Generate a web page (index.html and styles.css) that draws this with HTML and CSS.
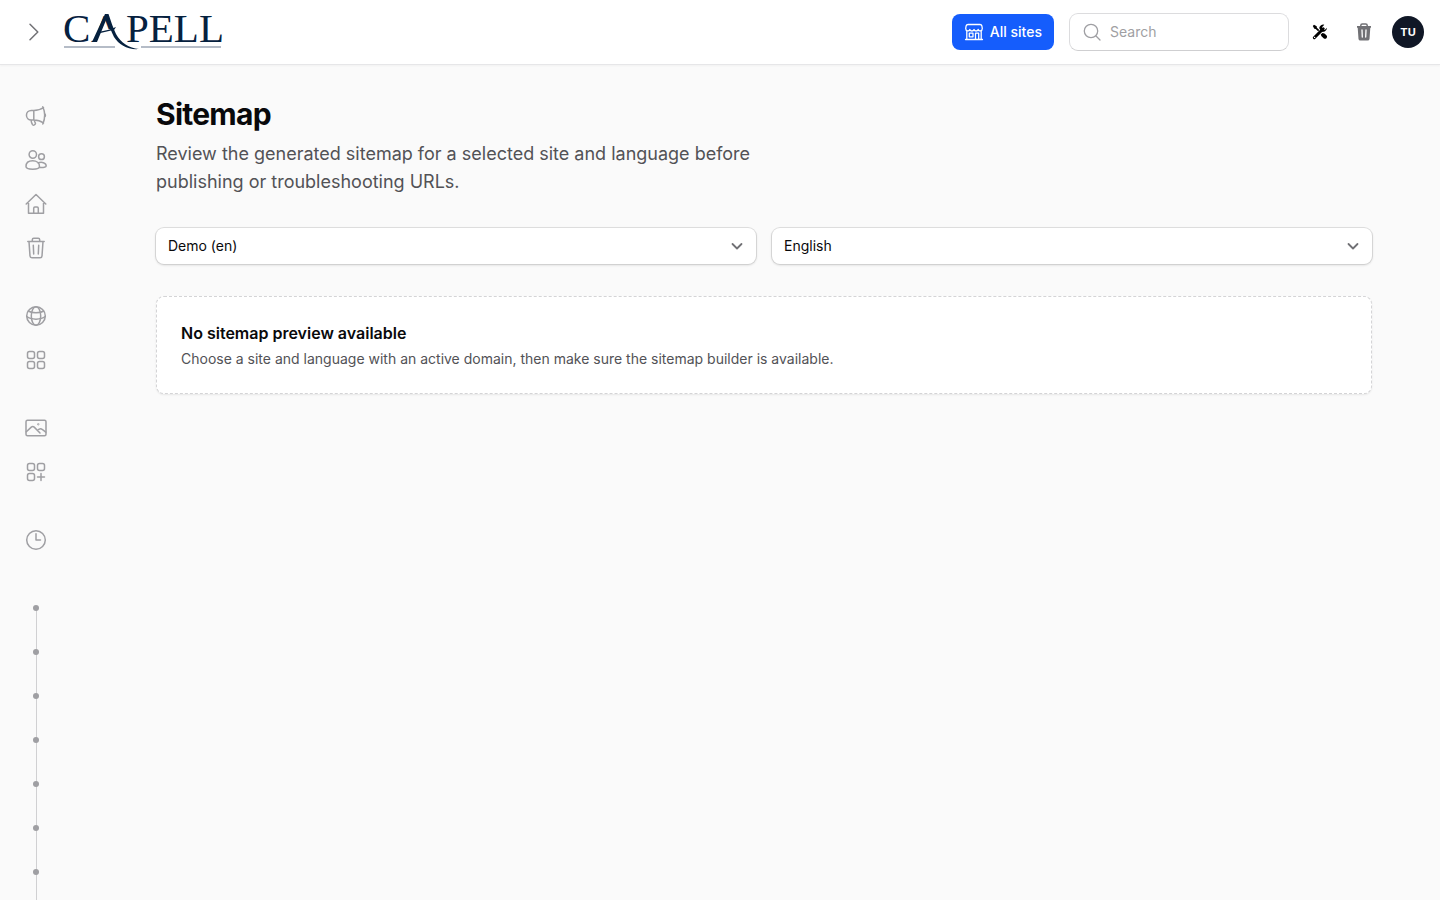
FILE: index.html
```html
<!DOCTYPE html>
<html lang="en">
<head>
<meta charset="utf-8">
<meta name="viewport" content="width=device-width, initial-scale=1">
<title>Sitemap</title>
<link rel="stylesheet" href="styles.css">
</head>
<body>
<header class="topbar">
  <button class="icon-btn expand" type="button" aria-label="Expand sidebar">
    <svg class="icon" viewBox="0 0 24 24"><path d="M8 4.200 15.800 12 8 19.800"/></svg>
  </button>
  <a class="logo" href="#" aria-label="Capell">
    <svg width="164" height="60" viewBox="0 -10 164 60">
      <defs><clipPath id="a-leg"><path d="M25 0H50V17H38V24H34V31H25Z"/></clipPath></defs>
      <g class="logo-letters">
        <text x="0" y="30">C</text>
        <text x="28" y="30" clip-path="url(#a-leg)">A</text>
        <text x="63" y="30">PELL</text>
      </g>
      <path class="logo-fill" d="M42 2H45.500C48 9 50 16 53 22C58 31 66 36 76 37C65 38 56 33 51 25C48 19 46 13 43.500 7L34 30H29Z"/>
      <path class="logo-fill" d="M35 20C42 19 48 17 53 15L51 18C46 19 40 20 34 22Z"/>
      <path class="logo-rule" d="M1 35H52M78 35H158"/>
    </svg>
  </a>
  <div class="tools">
    <button class="sites-btn" type="button">
      <svg class="icon icon-20" viewBox="0 0 20 20"><path d="M2.800 9V17.500M17.200 9V17.500M1.500 17.500H18.500M4 2.500H16Q17.500 2.500 17.900 4L18.300 6.500C18.300 9.300 14.700 9.500 14.200 7.500C13.500 9.500 10.600 9.500 10 7.500C9.400 9.500 6.500 9.500 5.800 7.500C5.300 9.500 1.700 9.300 1.700 6.500L2.100 4Q2.500 2.500 4 2.500ZM11.500 17.500V11.200H14.700V17.500M5.300 11.200H9V14.800H5.300Z"/></svg>
      All sites
    </button>
    <label class="search">
      <svg class="icon icon-20" viewBox="0 0 20 20"><circle cx="9" cy="9" r="6.700"/><path d="m14 14 4 4"/></svg>
      <input type="search" placeholder="Search" aria-label="Search">
    </label>
    <button class="icon-btn tools-btn" type="button" aria-label="Tools">
      <svg width="16" height="16" viewBox="0 0 16 16">
        <path d="M2.300 13.700 11.200 4.800" stroke="#000" stroke-width="3" stroke-linecap="round"/>
        <path fill="#000" d="M15 3.800A4 4 0 0 1 9 7.200L7.200 4A4 4 0 0 1 12.300.8L10 3.200 10.400 5.500 12.700 5.900ZM.8 2 2 .8 4.700 2.300 4.900 3.700 7.300 6.100 6.100 7.300 3.700 4.900 2.300 4.700ZM8.700 10.500 10.500 8.900C12 8.900 12.700 9.500 14.600 11.500C15.900 12.900 14 15.900 11.900 14.500L9.500 12.200Z"/>
        <circle cx="2.600" cy="13.400" r=".7" fill="#fff"/>
      </svg>
    </button>
    <button class="icon-btn bin-btn" type="button" aria-label="Trash">
      <svg width="20" height="20" viewBox="0 0 20 20">
        <path fill="#717175" d="M3 4H17V5.800H16.300L15.500 17Q15.300 18.600 13.600 18.600H6.400Q4.700 18.600 4.500 17L3.700 5.800H3Z"/>
        <path fill="none" stroke="#717175" stroke-width="1.500" d="M6.800 4.500V3.500Q6.800 2 8.300 2H11.700Q13.200 2 13.200 3.500V4.500"/>
        <path stroke="#fff" stroke-width="1.300" stroke-linecap="round" d="M8 8 8.300 15M12 8 11.700 15"/>
      </svg>
    </button>
    <button class="avatar" type="button" aria-label="User menu">TU</button>
  </div>
</header>
<div class="layout">
  <nav class="sidebar" aria-label="Main">
    <div class="group">
      <a href="#" aria-label="Campaigns"><svg class="icon" viewBox="0 0 24 24"><path d="M9.800 6.500H7.200A4.700 4.700 0 0 0 7.200 16H9.800M9.800 6.500V16M9.800 6.500C13.500 6.500 17 5.300 19.500 3.500M9.800 16C13.500 16 17 17.200 19.500 19M18.800 2.700C21.200 8 21.200 14.500 18.800 20M20.600 9.700C21.700 10.600 21.700 12.200 20.600 13M7 16C7.200 17.800 7.700 19.300 8.500 20.600Q9.200 21.600 10.300 20.800L11.200 20.100Q11.700 19.600 11.300 18.900C10.800 18 10.500 17.200 10.300 16"/></svg></a>
      <a href="#" aria-label="Users"><svg class="icon" viewBox="0 0 24 24"><circle cx="8.800" cy="6.500" r="3.700"/><circle cx="17.500" cy="8.700" r="2.900"/><path d="M2 18.500C2 14.900 4.800 12.800 8.700 12.800S15.500 15 15.500 18.500C15.500 20 12.500 21.200 8.700 21.200S2 20 2 18.500ZM14 15C17.500 13.500 22.200 14.700 22.200 18C22.200 19.100 19.300 19.800 15.500 19.300"/></svg></a>
      <a href="#" aria-label="Home"><svg class="icon" viewBox="0 0 24 24"><path d="M2.200 12 12 2.500 21.800 12M4.500 9.800V21.200H19.500V9.800M9.700 21V16.200Q9.700 15 10.900 15H13.100Q14.300 15 14.300 16.200V21"/></svg></a>
      <a href="#" aria-label="Trash"><svg class="icon" viewBox="0 0 24 24"><path d="M3.800 5.500H20.200M5 5.500 6 20Q6.100 21.800 7.900 21.800H16.100Q17.900 21.800 18 20L19 5.500M8.300 5.300V3.700Q8.300 2.200 9.800 2.200H14.200Q15.700 2.200 15.700 3.700V5.300M9.300 9.200 9.700 18M14.700 9.200 14.300 18"/></svg></a>
    </div>
    <div class="group">
      <a href="#" aria-label="Sites"><svg class="icon" viewBox="0 0 24 24"><circle cx="12" cy="12" r="9.300"/><ellipse cx="12" cy="12" rx="4.700" ry="9.300"/><path d="M4.300 7C8 9.300 16 9.300 19.700 7M2.700 12.500C7 16 17 16 21.300 12.500"/></svg></a>
      <a href="#" aria-label="Types"><svg class="icon" viewBox="0 0 24 24"><rect x="3.500" y="3.500" width="7" height="7" rx="2"/><rect x="13.500" y="3.500" width="7" height="7" rx="2"/><rect x="3.500" y="13.500" width="7" height="7" rx="2"/><rect x="13.500" y="13.500" width="7" height="7" rx="2"/></svg></a>
    </div>
    <div class="group">
      <a href="#" aria-label="Media"><svg class="icon" viewBox="0 0 24 24"><rect x="2" y="4.200" width="20" height="15.600" rx="1.500"/><path d="m2.300 15.800 5-4.700Q8.700 9.800 10.200 11.100L16 17M13.500 14.500 15.200 13.200Q16.700 12.100 18.200 13.400L21.800 16.200"/><circle cx="14.300" cy="8.300" r=".4"/></svg></a>
      <a href="#" aria-label="Extensions"><svg class="icon" viewBox="0 0 24 24"><rect x="3.500" y="3.500" width="7" height="7" rx="2"/><rect x="13.500" y="3.500" width="7" height="7" rx="2"/><rect x="3.500" y="13.500" width="7" height="7" rx="2"/><path d="M17 13.500V20.500M13.500 17H20.500"/></svg></a>
    </div>
    <div class="group">
      <a href="#" aria-label="History"><svg class="icon" viewBox="0 0 24 24"><circle cx="12" cy="12" r="9.300"/><path d="M12 5.800V12H16.500"/></svg></a>
    </div>
    <div class="group dots">
      <a href="#" aria-label="Item 1"></a>
      <a href="#" aria-label="Item 2"></a>
      <a href="#" aria-label="Item 3"></a>
      <a href="#" aria-label="Item 4"></a>
      <a href="#" aria-label="Item 5"></a>
      <a href="#" aria-label="Item 6"></a>
      <a href="#" aria-label="Item 7"></a>
      <a href="#" aria-label="Item 8"></a>
    </div>
  </nav>
  <main class="main">
    <h1>Sitemap</h1>
    <p class="lead">Review the generated sitemap for a selected site and language before publishing or troubleshooting URLs.</p>
    <div class="filters">
      <div class="select">
        <select aria-label="Site"><option>Demo (en)</option></select>
        <svg class="chevron" viewBox="0 0 20 20"><path d="m5.500 8 4.500 4.500L14.500 8"/></svg>
      </div>
      <div class="select">
        <select aria-label="Language"><option>English</option></select>
        <svg class="chevron" viewBox="0 0 20 20"><path d="m5.500 8 4.500 4.500L14.500 8"/></svg>
      </div>
    </div>
    <section class="empty">
      <h2>No sitemap preview available</h2>
      <p>Choose a site and language with an active domain, then make sure the sitemap builder is available.</p>
    </section>
  </main>
</div>
</body>
</html>
```
FILE: styles.css
```css
* { box-sizing: border-box; }
body {
  margin: 0;
  height: 100vh;
  display: flex;
  flex-direction: column;
  overflow: hidden;
  background: #fafafa;
  color: #09090b;
  font: 14px/20px Inter, sans-serif;
}
h1, h2, p { margin: 0; }
button, input, select { font: inherit; color: inherit; }
button { padding: 0; border: 0; background: none; cursor: pointer; }
.icon {
  width: 24px;
  height: 24px;
  flex: none;
  fill: none;
  stroke: currentColor;
  stroke-width: 1.5;
  stroke-linecap: round;
  stroke-linejoin: round;
}
.icon-20 { width: 20px; height: 20px; stroke-width: 1.3; }

.topbar {
  height: 65px;
  flex: none;
  display: flex;
  align-items: center;
  padding: 0 16px;
  background: #fff;
  border-bottom: 1px solid #e6e6e8;
  box-shadow: 0 1px 2px rgba(0, 0, 0, .04);
}
.icon-btn {
  width: 36px;
  height: 36px;
  display: grid;
  place-items: center;
}
.expand { color: #717175; }
.logo { display: flex; margin-left: 11px; }
.logo-letters { font: 41px "Liberation Serif", serif; fill: #06213f; }
.logo-fill { fill: #06213f; }
.logo-rule { stroke: #9da6b5; stroke-width: 1.5; }
.tools { margin-left: auto; display: flex; align-items: center; }
.sites-btn {
  height: 36px;
  display: flex;
  align-items: center;
  gap: 6px;
  padding: 0 12px;
  border-radius: 8px;
  background: #155dfc;
  color: #fff;
  font-weight: 500;
}
.search {
  width: 220px;
  height: 38px;
  display: flex;
  align-items: center;
  gap: 8px;
  margin: 0 13px 0 15px;
  padding: 0 12px;
  border: 1px solid #dcdcde;
  border-bottom-color: #cfcfd1;
  border-radius: 9px;
  background: #fff;
  color: #9f9fa3;
}
.search input {
  width: 100%;
  min-width: 0;
  padding: 0;
  border: 0;
  outline: 0;
  background: none;
}
.search input::placeholder { color: #9f9fa3; opacity: 1; }
.bin-btn { margin: 0 10px 0 8px; }
.avatar {
  width: 32px;
  height: 32px;
  border-radius: 50%;
  background: #101726;
  color: #fff;
  font-size: 11px;
  font-weight: 700;
}

.layout { flex: 1; min-height: 0; display: flex; }
.sidebar {
  width: 88px;
  flex: none;
  display: flex;
  flex-direction: column;
  gap: 28px;
  padding: 31px 32px 0 16px;
  overflow: hidden;
  color: #9f9fa3;
}
.group { flex: none; display: flex; flex-direction: column; gap: 4px; }
.group a {
  height: 40px;
  display: grid;
  place-items: center;
  color: inherit;
}
.dots { position: relative; }
.dots::before {
  content: "";
  position: absolute;
  top: 20px;
  bottom: 20px;
  left: 20px;
  width: 1px;
  background: #d0d0d2;
}
.dots a::after {
  content: "";
  width: 6px;
  height: 6px;
  border-radius: 50%;
  background: #9f9fa3;
  z-index: 1;
}

.main {
  flex: 1;
  min-width: 0;
  max-width: 1280px;
  margin: 0 auto;
  padding: 31px 32px;
}
h1 { font-size: 30px; line-height: 36px; font-weight: 700; letter-spacing: -0.025em; }
.lead {
  max-width: 672px;
  margin-top: 8px;
  font-size: 18px;
  line-height: 28px;
  color: #525256;
}
.filters {
  display: grid;
  grid-template-columns: 1fr 1fr;
  gap: 16px;
  margin: 32px 0;
}
.select { position: relative; display: flex; }
.select select {
  width: 100%;
  height: 36px;
  padding: 0 36px 0 12px;
  border: 0;
  border-radius: 8px;
  appearance: none;
  background: #fff;
  box-shadow: 0 0 0 1px rgba(9, 9, 11, .1), 0 1px 2px 1px rgba(0, 0, 0, .08);
}
.chevron {
  position: absolute;
  top: 8px;
  right: 9px;
  width: 20px;
  height: 20px;
  fill: none;
  stroke: #717175;
  stroke-width: 1.8;
  stroke-linecap: round;
  stroke-linejoin: round;
  pointer-events: none;
}
.empty {
  padding: 24px;
  border: 1px dashed #d4d4d6;
  border-radius: 8px;
  background: #fff;
  box-shadow: 0 1px 2px rgba(0, 0, 0, .08);
}
h2 { font-size: 16px; line-height: 24px; font-weight: 600; }
.empty p { margin-top: 4px; color: #525256; }
```
